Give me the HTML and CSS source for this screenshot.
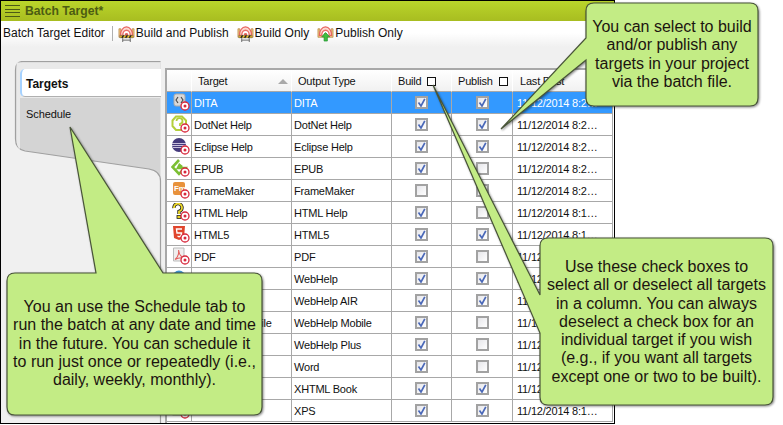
FILE: index.html
```html
<!DOCTYPE html>
<html lang="en">
<head>
<meta charset="utf-8">
<title>Batch Target</title>
<link rel="stylesheet" href="styles.css">
</head>
<body>
<svg class="defs" width="0" height="0" aria-hidden="true">
  <defs>
    <symbol id="badge" viewBox="0 0 20 20"><circle cx="14" cy="13" r="4" fill="#fff" stroke="#d8283c" stroke-width="1.3"/><circle cx="14" cy="13" r="1.5" fill="#d8283c"/></symbol>
    <symbol id="tool" viewBox="0 0 18 18">
      <path d="M1 4 H3 V11 H15 V4 H17 V13 H1 Z" fill="#f0c27c" stroke="#b98a4c" stroke-width=".8"/>
      <path d="M2.500 11 A6.500 9 0 0 1 15.500 11 Z" fill="#fbd8d0" stroke="#e8655f" stroke-width="1.200"/>
      <path d="M5 11 A4 5.500 0 0 1 13 11" fill="#fff" stroke="#ea6f6a" stroke-width="1.500"/>
      <path d="M7 11 A2 2.500 0 0 1 11 11 Z" fill="#e25d58"/>
    </symbol>
    <symbol id="check" viewBox="0 0 9 9"><path d="M1.500 4.500 L4 8 L7.800 .8" fill="none" stroke="#4a68b8" stroke-width="1.700"/></symbol>
    <symbol id="i-dita" viewBox="0 0 20 20"><rect x="3" y="1" width="11" height="12" rx="2" fill="#d8d8d8" stroke="#a9a9a9"/><path d="M7 4 L5 7 L7 10 M10 4 L12 7 L10 10" fill="none" stroke="#444" stroke-width="1.100"/></symbol>
    <symbol id="i-dotnet" viewBox="0 0 20 20"><path d="M5 1.500 H11 L15 5.500 V11 L11 15 H5 L1.500 11 V5.500 Z" fill="#fff" stroke="#b4cf3a" stroke-width="2"/><path d="M5.500 6 A3 3 0 1 1 9 9 V11" fill="none" stroke="#b4cf3a" stroke-width="1.800"/></symbol>
    <symbol id="i-eclipse" viewBox="0 0 20 20"><circle cx="8" cy="8" r="7" fill="#453a7c"/><path d="M1 6.500 H15 M1 8.500 H15 M2 10.500 H14" stroke="#d8cfe8" stroke-width=".9"/></symbol>
    <symbol id="i-epub" viewBox="0 0 20 20"><path d="M8 1 L1.500 8 L8 15 L14 9 H7 L8.500 6 L11 8" fill="none" stroke="#7cbf33" stroke-width="2.600"/></symbol>
    <symbol id="i-fm" viewBox="0 0 20 20"><rect x="2" y="1" width="12" height="13" rx="2" fill="#e8923c"/><text x="3" y="10" class="icon-text">Fm</text></symbol>
    <symbol id="i-hh" viewBox="0 0 20 20"><path d="M3 5 A4 4 0 1 1 8 8.500 V11" fill="none" stroke="#222" stroke-width="3.400"/><path d="M3 5 A4 4 0 1 1 8 8.500 V11" fill="none" stroke="#f0dc2c" stroke-width="1.800"/><rect x="6" y="12.500" width="4" height="3" fill="#e8d020" stroke="#222" stroke-width=".8"/></symbol>
    <symbol id="i-h5" viewBox="0 0 20 20"><path d="M2 1 H14 L13 13 L8 15 L3 13 Z" fill="#e0452c"/><path d="M11 4 H5.500 L6 8 H10.500 L10 11 L8 11.800 L6.500 11" fill="none" stroke="#fff" stroke-width="1.400"/></symbol>
    <symbol id="i-pdf" viewBox="0 0 20 20"><path d="M2.500 1 H13 V14 H2.500 Z" fill="#f0eeee" stroke="#bbb"/><path d="M4 12.500 C7 10 8 6 7.500 3 C8 7 10 10 13 11 C10 10.500 6.500 11 4 12.500 Z" fill="none" stroke="#e3605e" stroke-width="1.100"/></symbol>
    <symbol id="i-web" viewBox="0 0 20 20"><circle cx="8" cy="8" r="6.500" fill="#3f93d0"/></symbol>
    <symbol id="i-word" viewBox="0 0 20 20"><rect x="2" y="1" width="11" height="13" fill="#3f6fc0"/></symbol>
    <symbol id="i-xps" viewBox="0 0 20 20"><rect x="2" y="1" width="11" height="13" fill="#e8e8e8" stroke="#aaa"/></symbol>
  </defs>
</svg>

<div class="window">
  <header class="titlebar">
    <span class="grip"><i></i><i></i><i></i><i></i></span>
    <span class="title">Batch Target*</span>
  </header>

  <nav class="toolbar">
    <span class="tool-name">Batch Target Editor</span>
    <span class="tool-sep"></span>
    <span class="tool-btn">
      <svg class="tool-icon" viewBox="0 0 18 18"><use href="#tool"/><path d="M2 11 H16 V13.500 H2 Z" fill="#f0c020" stroke="#555" stroke-width=".5"/><path d="M4 13.500 L6 11 M8 13.500 L10 11 M12 13.500 L14 11" stroke="#222" stroke-width="1.500"/><path d="M5 14 V18 M13 14 V18 M5 16 H13" stroke="#666"/></svg>
      Build and Publish</span>
    <span class="tool-btn">
      <svg class="tool-icon" viewBox="0 0 18 18"><use href="#tool"/><path d="M2 11 H16 V13.500 H2 Z" fill="#f0c020" stroke="#555" stroke-width=".5"/><path d="M4 13.500 L6 11 M8 13.500 L10 11 M12 13.500 L14 11" stroke="#222" stroke-width="1.500"/><path d="M5 14 V18 M13 14 V18 M5 16 H13" stroke="#666"/></svg>
      Build Only</span>
    <span class="tool-btn">
      <svg class="tool-icon" viewBox="0 0 18 18"><use href="#tool"/><path d="M9 8 L13.500 12.500 H11 V17 H7.500 V12.500 H5 Z" fill="#3fbf3f" stroke="#1f8f2f" stroke-width=".7"/></svg>
      Publish Only</span>
  </nav>

  <main class="main">
    <aside class="rail">
      <svg class="rail-bg" viewBox="0 0 164 362" aria-hidden="true">
        <path d="M159.500 .5 H22 Q14.500 .5 14.500 9 V78 Q14.500 88 24 90 L148 108 Q159.500 110 159.500 120 V362" fill="#d4d4d4" stroke="#a0a0a0" stroke-width="1.200"/>
        <path d="M15.500 1.500 H159 V37 H19 V88 Q15.500 86 15.500 78 Z" fill="#e9e9e9"/>
      </svg>
      <div class="tab tab-active">Targets</div>
      <div class="tab">Schedule</div>
    </aside>

    <div class="grid-wrap">
      <table class="grid">
        <colgroup><col class="c-icon"><col class="c-name"><col class="c-name"><col class="c-build"><col class="c-pub"><col class="c-last"></colgroup>
        <thead>
          <tr>
            <th></th>
            <th class="h-target">Target<span class="sort"></span></th>
            <th class="h-text">Output Type</th>
            <th class="h-text">Build<span class="hbox"></span></th>
            <th class="h-text">Publish<span class="hbox"></span></th>
            <th class="h-last">Last Post</th>
          </tr>
        </thead>
        <tbody>
          <tr class="selected"><td class="ic"><svg class="icon"><use href="#i-dita"/><use href="#badge"/></svg></td><td>DITA</td><td>DITA</td><td class="cc"><span class="cb"><svg><use href="#check"/></svg></span></td><td class="cc"><span class="cb"><svg><use href="#check"/></svg></span></td><td class="last">11/12/2014 8:2…</td></tr>
          <tr><td class="ic"><svg class="icon"><use href="#i-dotnet"/><use href="#badge"/></svg></td><td>DotNet Help</td><td>DotNet Help</td><td class="cc"><span class="cb"><svg><use href="#check"/></svg></span></td><td class="cc"><span class="cb"><svg><use href="#check"/></svg></span></td><td class="last">11/12/2014 8:2…</td></tr>
          <tr><td class="ic"><svg class="icon"><use href="#i-eclipse"/><use href="#badge"/></svg></td><td>Eclipse Help</td><td>Eclipse Help</td><td class="cc"><span class="cb"><svg><use href="#check"/></svg></span></td><td class="cc"><span class="cb"><svg><use href="#check"/></svg></span></td><td class="last">11/12/2014 8:2…</td></tr>
          <tr><td class="ic"><svg class="icon"><use href="#i-epub"/><use href="#badge"/></svg></td><td>EPUB</td><td>EPUB</td><td class="cc"><span class="cb"><svg><use href="#check"/></svg></span></td><td class="cc"><span class="cb"></span></td><td class="last">11/12/2014 8:2…</td></tr>
          <tr><td class="ic"><svg class="icon"><use href="#i-fm"/><use href="#badge"/></svg></td><td>FrameMaker</td><td>FrameMaker</td><td class="cc"><span class="cb"></span></td><td class="cc"><span class="cb"></span></td><td class="last">11/12/2014 8:2…</td></tr>
          <tr><td class="ic"><svg class="icon"><use href="#i-hh"/><use href="#badge"/></svg></td><td>HTML Help</td><td>HTML Help</td><td class="cc"><span class="cb"><svg><use href="#check"/></svg></span></td><td class="cc"><span class="cb"></span></td><td class="last">11/12/2014 8:1…</td></tr>
          <tr><td class="ic"><svg class="icon"><use href="#i-h5"/><use href="#badge"/></svg></td><td>HTML5</td><td>HTML5</td><td class="cc"><span class="cb"><svg><use href="#check"/></svg></span></td><td class="cc"><span class="cb"><svg><use href="#check"/></svg></span></td><td class="last">11/12/2014 8:1…</td></tr>
          <tr><td class="ic"><svg class="icon"><use href="#i-pdf"/><use href="#badge"/></svg></td><td>PDF</td><td>PDF</td><td class="cc"><span class="cb"><svg><use href="#check"/></svg></span></td><td class="cc"><span class="cb"></span></td><td class="last">11/12/2014 8:1…</td></tr>
          <tr><td class="ic"><svg class="icon"><use href="#i-web"/><use href="#badge"/></svg></td><td>WebHelp</td><td>WebHelp</td><td class="cc"><span class="cb"><svg><use href="#check"/></svg></span></td><td class="cc"><span class="cb"><svg><use href="#check"/></svg></span></td><td class="last">11/12/2014 8:1…</td></tr>
          <tr><td class="ic"><svg class="icon"><use href="#i-web"/><use href="#badge"/></svg></td><td>WebHelp AIR</td><td>WebHelp AIR</td><td class="cc"><span class="cb"><svg><use href="#check"/></svg></span></td><td class="cc"><span class="cb"><svg><use href="#check"/></svg></span></td><td class="last">11/12/2014 8:1…</td></tr>
          <tr><td class="ic"><svg class="icon"><use href="#i-web"/><use href="#badge"/></svg></td><td>WebHelp Mobile</td><td>WebHelp Mobile</td><td class="cc"><span class="cb"><svg><use href="#check"/></svg></span></td><td class="cc"><span class="cb"></span></td><td class="last">11/12/2014 8:1…</td></tr>
          <tr><td class="ic"><svg class="icon"><use href="#i-web"/><use href="#badge"/></svg></td><td>WebHelp Plus</td><td>WebHelp Plus</td><td class="cc"><span class="cb"><svg><use href="#check"/></svg></span></td><td class="cc"><span class="cb"></span></td><td class="last">11/12/2014 8:1…</td></tr>
          <tr><td class="ic"><svg class="icon"><use href="#i-word"/><use href="#badge"/></svg></td><td>Word</td><td>Word</td><td class="cc"><span class="cb"><svg><use href="#check"/></svg></span></td><td class="cc"><span class="cb"></span></td><td class="last">11/12/2014 8:1…</td></tr>
          <tr><td class="ic"><svg class="icon"><use href="#i-xps"/><use href="#badge"/></svg></td><td>XHTML Book</td><td>XHTML Book</td><td class="cc"><span class="cb"><svg><use href="#check"/></svg></span></td><td class="cc"><span class="cb"><svg><use href="#check"/></svg></span></td><td class="last">11/12/2014 8:1…</td></tr>
          <tr><td class="ic"><svg class="icon"><use href="#i-xps"/><use href="#badge"/></svg></td><td>XPS</td><td>XPS</td><td class="cc"><span class="cb"><svg><use href="#check"/></svg></span></td><td class="cc"><span class="cb"><svg><use href="#check"/></svg></span></td><td class="last">11/12/2014 8:1…</td></tr>
        </tbody>
      </table>
    </div>
  </main>
</div>

<svg class="callout-shapes" viewBox="0 0 783 425" aria-hidden="true">
  <path d="M594 3 H750 Q758 3 758 11 V98 Q758 106 750 106 H594 Q586 106 586 98 V60 L501 129 L586 38 V11 Q586 3 594 3 Z"/>
  <path d="M15 273 H96 L70 127 L163 273 H254 Q262 273 262 281 V407 Q262 415 254 415 H15 Q7 415 7 407 V281 Q7 273 15 273 Z"/>
  <path d="M548 238 H765 Q773 238 773 246 V397 Q773 405 765 405 H548 Q540 405 540 397 V333 L433 85 L540 295 V246 Q540 238 548 238 Z"/>
</svg>
<p class="note note-top">You can select to build<br>and/or publish any<br>targets in your project<br>via the batch file.</p>
<p class="note note-left">You an use the Schedule tab to<br>run the batch at any date and time<br>in the future. You can schedule it<br>to run just once or repeatedly (i.e.,<br>daily, weekly, monthly).</p>
<p class="note note-right">Use these check boxes to<br>select all or deselect all targets<br>in a column. You can always<br>deselect a check box for an<br>individual target if you wish<br>(e.g., if you want all targets<br>except one or two to be built).</p>
</body>
</html>
```
FILE: styles.css
```css
* { box-sizing: border-box; }
html, body { margin: 0; padding: 0; background: #fff; }
body {
  width: 783px;
  height: 425px;
  overflow: hidden;
  position: relative;
  font: 12px "Liberation Sans", Arial, sans-serif;
  color: #111;
}
.defs { position: absolute; }
.icon-text { font: bold 8px "Liberation Sans", Arial, sans-serif; fill: #fff; }

.window {
  width: 615px;
  height: 424px;
  border: 1px solid #000;
  display: flex;
  flex-direction: column;
  background: #f0f0f0;
  overflow: hidden;
}
.titlebar {
  height: 20px;
  flex: none;
  display: flex;
  align-items: center;
  gap: 5px;
  padding-left: 4px;
  background: linear-gradient(#bad52b, #a8bd20);
}
.grip { display: flex; flex-direction: column; gap: 2.500px; width: 15px; }
.grip i { display: block; height: 1px; background: #4c5a16; }
.title { font-weight: bold; font-size: 12.200px; color: #4c5c12; }

.toolbar {
  height: 40px;
  flex: none;
  display: flex;
  align-items: flex-start;
  padding: 3px 0 0 2px;
  background: linear-gradient(#fff 0, #fff 12px, #f0f0f0 26px);
  white-space: nowrap;
}
.tool-name, .tool-btn { display: flex; align-items: center; height: 18px; gap: 1px; }
.tool-sep { width: 1px; height: 15px; margin: 2px 5px 0 7px; background: #b0b0b0; }
.tool-btn { margin-right: 8px; }
.tool-icon { width: 17px; height: 17px; flex: none; }

.main { flex: 1; display: flex; min-height: 0; }
.rail {
  width: 164px;
  flex: none;
  position: relative;
  padding: 8px 0 0 19px;
}
.rail-bg { position: absolute; left: 0; top: 0; width: 164px; height: 362px; }
.tab { position: relative; height: 28px; width: 141px; line-height: 30px; padding-left: 6px; font-size: 11px; letter-spacing: -.1px; }
.tab-active {
  background: #fff;
  font-size: 12px;
  letter-spacing: 0;
  font-weight: bold;
  border-left: 2px solid #a6d2ff;
  border-bottom: 1px solid #b0b0b0;
  border-radius: 5px 0 0 5px;
  padding-left: 4px;
}
.tab-active + .tab { margin-top: 3px; line-height: 28px; }

.grid-wrap { margin-top: 7px; flex: 1; min-width: 0; background: #fff; border-left: 2px solid #a8a8a8; border-top: 2px solid #a8a8a8; }
.grid { table-layout: fixed; border-collapse: separate; border-spacing: 0; width: 446px; font-size: 11px; letter-spacing: -.2px; }
.c-icon { width: 25px; }
.c-name { width: 100px; }
.c-build { width: 60px; }
.c-pub { width: 61px; }
.c-last { width: 100px; }
.grid th, .grid td {
  height: 22px;
  padding: 0 0 0 2px;
  font-weight: normal;
  text-align: left;
  white-space: nowrap;
  overflow: hidden;
  border-right: 1px solid #a8a8a8;
  border-bottom: 1px solid #a8a8a8;
}
.grid th {
  padding-left: 6px;
  background: linear-gradient(#fff, #f1f1f1);
  border-right: 1px solid #fff;
  position: relative;
}
.grid th.h-last { padding-left: 7px; }
.sort {
  position: absolute;
  right: 3px;
  top: 9px;
  border-left: 5px solid transparent;
  border-right: 5px solid transparent;
  border-bottom: 5px solid #a9a9a9;
}
.hbox { display: inline-block; width: 9px; height: 9px; border: 1.500px solid #111; margin-left: 6px; vertical-align: -1px; background: #fff; }
.grid td.ic { padding: 0; vertical-align: top; }
.icon { display: block; width: 20px; height: 20px; margin: 1px 0 0 4px; }
.grid td.cc { padding: 0; text-align: center; line-height: 0; }
.cb {
  display: inline-block;
  width: 13px;
  height: 13px;
  border: 2px solid #a2a2a2;
  background: linear-gradient(135deg, #e6e6ea, #fff);
  vertical-align: middle;
}
.cb svg { display: block; width: 9px; height: 9px; }
.grid td.last { padding-left: 4px; }
.selected td { background: #3399ff; color: #fff; }

.callout-shapes {
  position: absolute;
  left: 0;
  top: 0;
  width: 783px;
  height: 425px;
  fill: #c3ec85;
  stroke: #485438;
  stroke-width: 1.200px;
  filter: drop-shadow(1px 1px 1px rgba(0, 0, 0, .45));
}
.note {
  position: absolute;
  margin: 0;
  text-align: center;
  white-space: nowrap;
  font-size: 16px;
  line-height: 18.300px;
  color: #1c1410;
}
.note-top { left: 586px; width: 172px; top: 18px; }
.note-left { left: 7px; width: 255px; top: 298px; }
.note-right { left: 540px; width: 233px; top: 258px; }
```
